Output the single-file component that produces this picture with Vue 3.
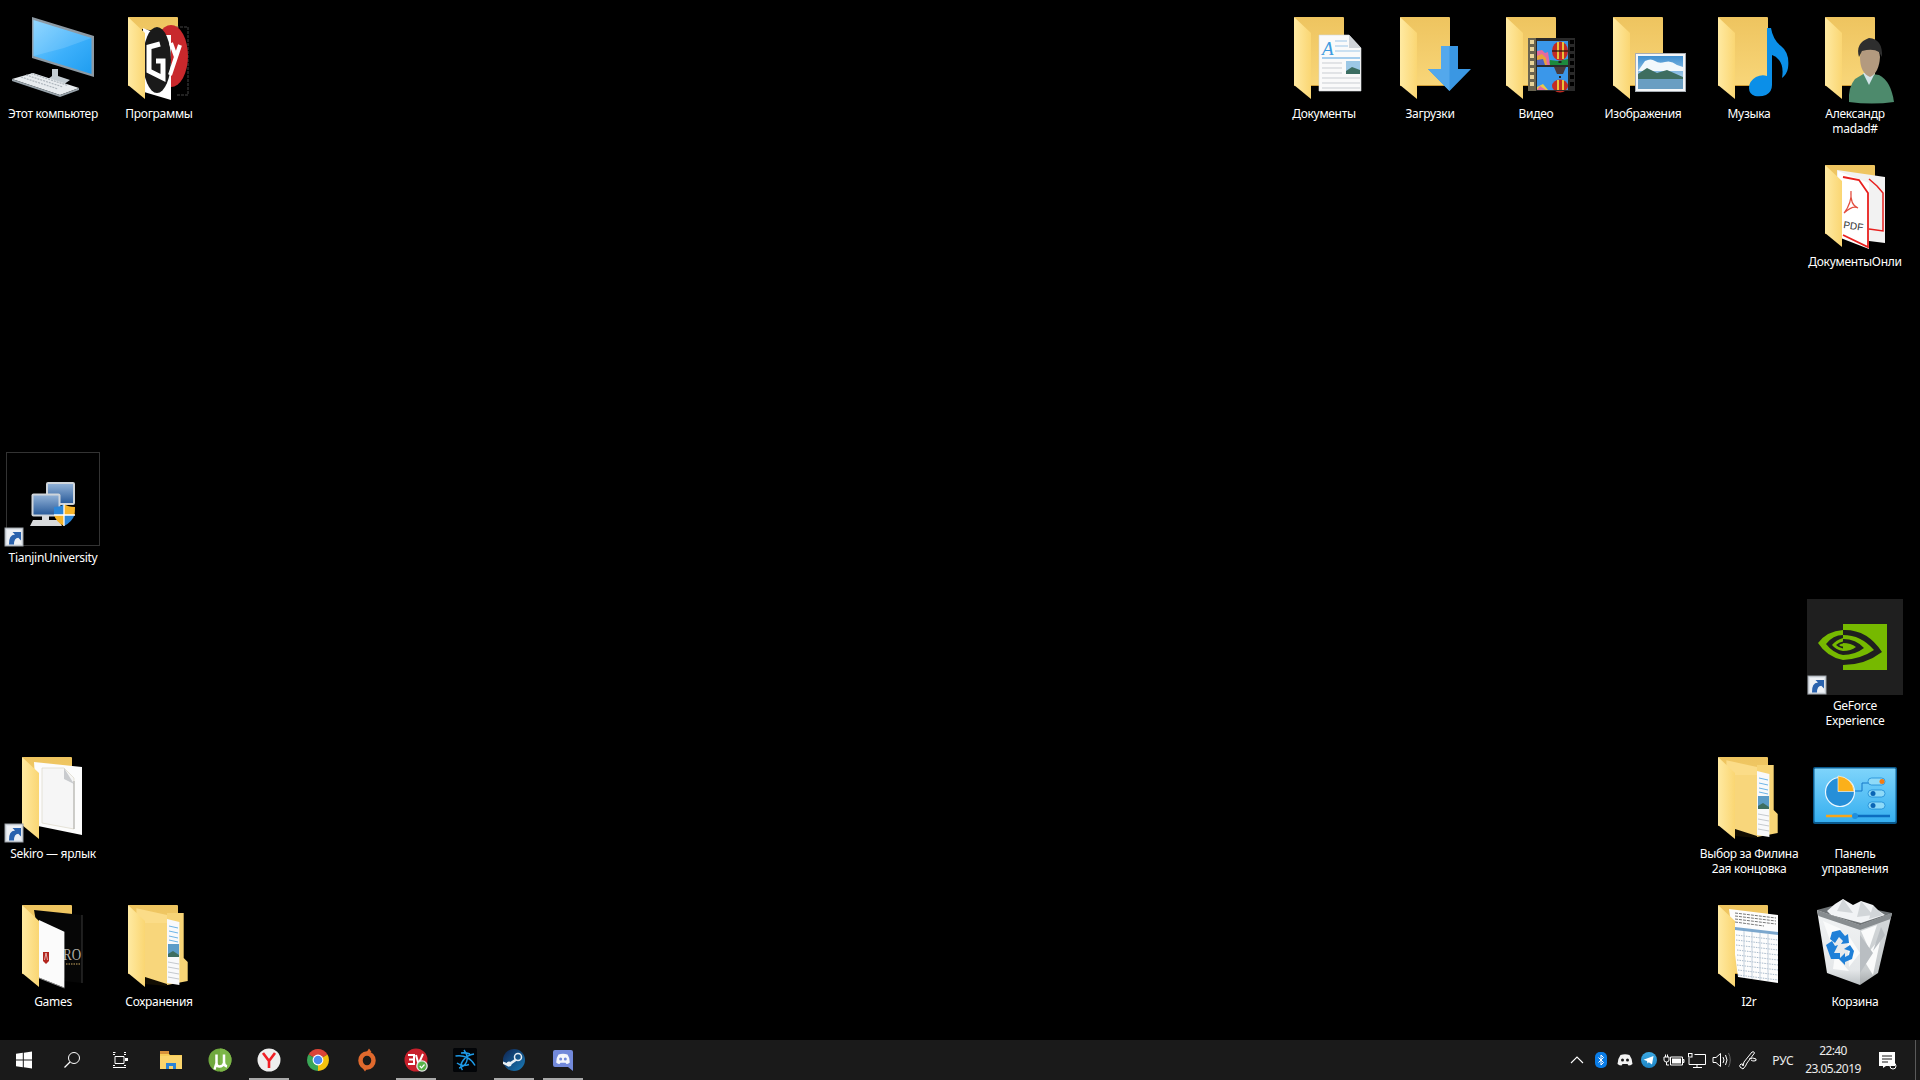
<script setup>
const items = [
  { id: 'pc', label: 'Этот компьютер', c: 53, r: 0 },
  { id: 'prog', label: 'Программы', c: 159, r: 0 },
  { id: 'docs', label: 'Документы', c: 1324, r: 0 },
  { id: 'down', label: 'Загрузки', c: 1430, r: 0 },
  { id: 'video', label: 'Видео', c: 1536, r: 0 },
  { id: 'pics', label: 'Изображения', c: 1643, r: 0 },
  { id: 'music', label: 'Музыка', c: 1749, r: 0 },
  { id: 'user', label: 'Александр\nmadad#', c: 1855, r: 0 },
  { id: 'pdf', label: 'ДокументыОнли', c: 1855, r: 1 },
  { id: 'tianjin', label: 'TianjinUniversity', c: 53, r: 3 },
  { id: 'nvidia', label: 'GeForce\nExperience', c: 1855, r: 4 },
  { id: 'sekiro', label: 'Sekiro — ярлык', c: 53, r: 5 },
  { id: 'stack', label: 'Выбор за Филина\n2ая концовка', c: 1749, r: 5 },
  { id: 'panel', label: 'Панель\nуправления', c: 1855, r: 5 },
  { id: 'games', label: 'Games', c: 53, r: 6 },
  { id: 'stack', label: 'Сохранения', c: 159, r: 6 },
  { id: 'sheet', label: 'I2r', c: 1749, r: 6 },
  { id: 'trash', label: 'Корзина', c: 1855, r: 6 }
]
const place = (i) => ({ left: i.c - 53 + 'px', top: 5 + 148 * i.r + 'px' })
const nudged = (i) => i.c < 200 || i.c === 1749

const sysButtons = ['t-start', 't-search', 't-task']
const apps = [
  { id: 't-explorer' },
  { id: 't-utorrent' },
  { id: 't-yandex', on: true },
  { id: 't-chrome' },
  { id: 't-origin' },
  { id: 't-av', on: true },
  { id: 't-bnet' },
  { id: 't-steam', on: true },
  { id: 't-discord', on: true }
]
const tray = ['s-chev', 's-bt', 's-disc', 's-tg', 's-power', 's-net', 's-vol']
</script>

<template>
  <div class="desktop">
    <svg class="defs" aria-hidden="true">
      <defs>
        <linearGradient id="fb" x1="0" y1="0" x2="0" y2="1"><stop offset="0" stop-color="#eec45f" /><stop offset="1" stop-color="#f8d679" /></linearGradient>
        <linearGradient id="ff" x1="0" y1="0" x2="1" y2="0"><stop offset="0" stop-color="#ffeaa2" /><stop offset="1" stop-color="#fad673" /></linearGradient>
        <linearGradient id="scr" x1="0" y1="0" x2="1" y2="1"><stop offset="0" stop-color="#7fd0ff" /><stop offset=".55" stop-color="#3db0fb" /><stop offset="1" stop-color="#1f9df0" /></linearGradient>
        <linearGradient id="sky" x1="0" y1="0" x2="0" y2="1"><stop offset="0" stop-color="#3f8fd0" /><stop offset="1" stop-color="#d5eaf7" /></linearGradient>
        <linearGradient id="mon" x1="0" y1="0" x2="0" y2="1"><stop offset="0" stop-color="#8fb0d6" /><stop offset="1" stop-color="#2c5d9b" /></linearGradient>
        <linearGradient id="panelbg" x1="0" y1="0" x2="0" y2="1"><stop offset="0" stop-color="#7ed4fb" /><stop offset="1" stop-color="#36aff0" /></linearGradient>
        <linearGradient id="steamg" x1="0" y1="0" x2="1" y2="1"><stop offset="0" stop-color="#0f2350" /><stop offset="1" stop-color="#1a7cb8" /></linearGradient>
        <linearGradient id="tgg" x1="0" y1="0" x2="0" y2="1"><stop offset="0" stop-color="#3ba8e2" /><stop offset="1" stop-color="#1c84c4" /></linearGradient>
        <linearGradient id="binl" x1="0" y1="0" x2="0" y2="1"><stop offset="0" stop-color="#f1f3f4" /><stop offset=".8" stop-color="#e4e7e9" /><stop offset="1" stop-color="#bcc1c4" /></linearGradient>
        <linearGradient id="binr" x1="0" y1="0" x2="0" y2="1"><stop offset="0" stop-color="#d4d8da" /><stop offset=".8" stop-color="#c8ccce" /><stop offset="1" stop-color="#a4a8ab" /></linearGradient>

        <symbol id="fback" viewBox="0 0 96 96">
          <path d="M18 13q0-1 1-1h48q1 0 1 1v68H18z" fill="url(#fb)" />
          <path d="M18 80.500h50" stroke="#cf9e38" stroke-width="1" />
        </symbol>
        <symbol id="fflap" viewBox="0 0 96 96">
          <path d="M18 12 35 28V94L18 80Z" fill="url(#ff)" />
        </symbol>
        <symbol id="sc" viewBox="0 0 96 96">
          <rect x="1" y="79" width="18" height="18" fill="#dfe4ea" stroke="#9aa0a6" />
          <rect x="3" y="81" width="14" height="14" fill="#eef1f5" />
          <path d="M5 95.500Q4.500 86 11 85.500L8.500 83H17V91.500L14.300 88.800Q10 89 10 95.500Z" fill="#2a62ad" />
        </symbol>

        <symbol id="pc" viewBox="0 0 96 96">
          <path d="M48 64h6v7l12 4-10 7-16-5 8-6z" fill="#c3ccd2" />
          <path d="M28 12 90 31V72L28 53Z" fill="#8d9aa4" />
          <path d="M29.500 15 87.500 33V69L29.500 51Z" fill="url(#scr)" />
          <path d="M29.500 15 87.500 33 60 43 29.500 51Z" fill="#fff" opacity=".14" />
          <path d="M29 68 75 83 56 90 8 74Z" fill="#e8ecef" />
          <path d="M8 74 56 90 75 83V85L56 92 8 76Z" fill="#98a3ab" />
          <path d="M17 72l37 12M22 70l37 12M27 68.500l37 12" stroke="#aeb6bd" stroke-width="1.200" stroke-dasharray="2 1" />
        </symbol>

        <symbol id="prog" viewBox="0 0 96 96">
          <use href="#fback" />
          <path d="M32 24 60 28 78 22V90L50 86 32 84Z" fill="#000" />
          <path d="M66 22h12v68H66" fill="none" stroke="#555" stroke-width=".8" stroke-dasharray="3 1" />
          <ellipse cx="61" cy="51" rx="17" ry="31" fill="#c8282c" />
          <path d="M33 23 50 30 61 30V95L34 87Z" fill="#fff" />
          <ellipse cx="47" cy="55" rx="14" ry="33" fill="#1a1a1a" />
          <path d="M50 39 39 42V66L53 73V56H46" fill="none" stroke="#fff" stroke-width="5" />
          <path d="M61 38 66 52M60 70 70 40" fill="none" stroke="#fff" stroke-width="4" />
          <use href="#fflap" />
        </symbol>

        <symbol id="docs" viewBox="0 0 96 96">
          <use href="#fback" /><use href="#fflap" />
          <path d="M43 30H73L85 43V86H43Z" fill="#fafafa" stroke="#d5d8dc" stroke-width=".6" />
          <path d="M73 30V43H85Z" fill="#cfd3d8" />
          <text x="46" y="50" class="docA">A</text>
          <path d="M59 36H71M59 41H72M59 46H84" stroke="#9cc6e8" stroke-width="1" />
          <path d="M46 53H84" stroke="#4f9fe0" stroke-width="1" />
          <path d="M46 58H66M46 63H66M46 68H66M46 73H84M46 78H84M46 83H84" stroke="#c9cdd2" stroke-width="1" />
          <rect x="70" y="56" width="14" height="13" fill="#9cc8e6" />
          <path d="M70 66 76 62 84 65V69H70Z" fill="#3c6e62" />
        </symbol>

        <symbol id="down" viewBox="0 0 96 96">
          <use href="#fback" /><use href="#fflap" />
          <path d="M59 41H76V64H89L67.500 86 46 64H59Z" fill="#3a97e3" />
          <path d="M59 41H67.500V86L46 64H59Z" fill="#53a8ec" />
        </symbol>

        <symbol id="video" viewBox="0 0 96 96">
          <use href="#fback" /><use href="#fflap" />
          <rect x="40" y="33" width="47" height="53" fill="#2a2a2a" />
          <rect x="40" y="33" width="8" height="53" fill="#6b6550" />
          <path d="M42 35h4v4h-4zM42 42h4v4h-4zM42 49h4v4h-4zM42 56h4v4h-4zM42 63h4v4h-4zM42 70h4v4h-4zM42 77h4v4h-4z" fill="#e8d49a" />
          <path d="M82 35h4v4h-4zM82 42h4v4h-4zM82 49h4v4h-4zM82 56h4v4h-4zM82 63h4v4h-4zM82 70h4v4h-4zM82 77h4v4h-4z" fill="#000" />
          <rect x="49" y="36" width="31" height="24" fill="#3a97ea" />
          <rect x="49" y="62" width="31" height="23" fill="#3a97ea" />
          <path d="M60 60 62 55 70 56 80 54V60Z" fill="#1d8a3d" />
          <path d="M49 46 54 45 57 48 60 47 62 60H49Z" fill="#e46aa0" />
          <path d="M49 51 54 49 58 53 59 60H49Z" fill="#e8a23a" />
          <path d="M49 55 55 54 57 60H49Z" fill="#4a62c0" />
          <path d="M49 82 55 79 60 85H49Z" fill="#e9c94a" />
          <path d="M49 85 52 81 58 85Z" fill="#e46aa0" />
          <ellipse cx="72" cy="46" rx="8" ry="9.500" fill="#c42a22" />
          <path d="M69 37h2v17h-2zM74 37h2v17h-2z" fill="#e8c33a" />
          <path d="M64 46H80" stroke="#201510" stroke-width="1.200" />
          <rect x="70.500" y="56" width="3" height="2" fill="#222" />
          <path d="M66 62H78L75 69H69Z" fill="#4a3a3a" />
          <rect x="71" y="71" width="2" height="2" fill="#222" />
          <ellipse cx="72" cy="81" rx="8" ry="6.500" fill="#c42a22" />
          <path d="M69 75h2v10h-2zM74 75h2v10h-2z" fill="#e8c33a" />
          <rect x="49" y="85" width="31" height="1" fill="#2a2a2a" />
        </symbol>

        <symbol id="pics" viewBox="0 0 96 96">
          <use href="#fback" /><use href="#fflap" />
          <rect x="40.500" y="48.500" width="50" height="38" fill="#f4f6f8" stroke="#a7adb3" />
          <rect x="43" y="51" width="45" height="33" fill="url(#sky)" />
          <path d="M50 56q6-3 10 0t10 1 12 3l6 2v4H43z" fill="#f2f8fc" />
          <path d="M43 69 52 63 62 68 72 65 88 72V74H43Z" fill="#3e6e60" />
          <rect x="43" y="74" width="45" height="10" fill="#6a9ec2" />
        </symbol>

        <symbol id="music" viewBox="0 0 96 96">
          <use href="#fback" /><use href="#fflap" />
          <path d="M67 23h4q2 12 10 18 9 7 7 22-1 6-6 10 2-12-3-18-3-4-7-5V80q0 7-6 10-5 2-11 1-6-2-6-8 0-7 7-11 6-3 11-1Z" fill="#0b8fe8" />
        </symbol>

        <symbol id="user" viewBox="0 0 96 96">
          <use href="#fback" /><use href="#fflap" />
          <path d="M42 97Q41 82 48 74L58 68 72 70Q84 76 87 97Q65 100 42 97Z" fill="#4d8a6c" />
          <path d="M56 68 62 80 68 68Z" fill="#d2e3e8" />
          <path d="M53 52Q53 68 63 72 72 68 73 52 72 40 62 40 54 42 53 52Z" fill="#b39a7f" />
          <path d="M52 52Q48 38 62 33 76 34 75 52L72 47Q66 43 55 46Z" fill="#2e2e2e" />
        </symbol>

        <symbol id="pdf" viewBox="0 0 96 96">
          <use href="#fback" />
          <path d="M30 17 78 24V90L30 84Z" fill="#f2f2f2" />
          <path d="M62 26 70 33 76 40V78L62 76" fill="none" stroke="#e8201e" stroke-width="1.500" />
          <path d="M31 18 62 30V96L31 84Z" fill="#fff" />
          <path d="M36 24 52 27 61 40V94L36 82" fill="none" stroke="#e8201e" stroke-width="1.800" />
          <path d="M44 38Q45 50 37 60 46 52 51 55 43 52 44 38Z" fill="none" stroke="#e24d3e" stroke-width="1.200" />
          <text x="36" y="75" class="pdfT" transform="rotate(8 36 75)">PDF</text>
          <use href="#fflap" />
        </symbol>

        <symbol id="tianjin" viewBox="0 0 96 96">
          <rect x="2.500" y="3.500" width="93" height="93" fill="#000" stroke="#333" />
          <rect x="42" y="33" width="29" height="23" rx="2" fill="#cfd5db" />
          <rect x="44" y="35" width="25" height="19" fill="url(#mon)" />
          <rect x="27.500" y="44.500" width="29" height="23" rx="2" fill="#cfd5db" />
          <rect x="29.500" y="46.500" width="25" height="19" fill="url(#mon)" />
          <path d="M38 67h7v4h10l3 6H26l3-6h9z" fill="#d8dadc" />
          <path d="M50 58Q57 58 60 55V66H50Z" fill="#2a85d8" />
          <path d="M60 55Q64 58 71 58 71 62 70.500 66H60Z" fill="#f6b52a" />
          <path d="M50 66H60V77Q52 73 50 66Z" fill="#f6b52a" />
          <path d="M60 66H70.500Q68 73 60 77Z" fill="#2a85d8" />
          <path d="M50 66H71M60 55V77" stroke="#fff" stroke-width="1.300" />
          <use href="#sc" />
        </symbol>

        <symbol id="nvidia" viewBox="0 0 96 96">
          <rect x="0" y="2" width="96" height="96" fill="#1f1f1f" />
          <rect x="36" y="27" width="44" height="46" fill="#76b900" />
          <path d="M36 33Q20 34 11 46 20 60 36 63Z" fill="#76b900" />
          <path d="M36 38Q26 38 19 47 26 56 36 58V54Q29 53 25 48 29 43 36 41Z" fill="#1f1f1f" />
          <path d="M36 44.500Q32 45 29 48 32 51 36 51.500V49.500Q33.500 49.500 32 48 33.500 46.500 36 46.500Z" fill="#1f1f1f" />
          <path d="M36 33Q60 32 75 55 58 68 36 68V63Q54 62 67 53 54 38 36 38Z" fill="#1f1f1f" />
          <path d="M36 42Q49 42 57 51 48 58 36 58V54Q44 54 49 50 44 46 36 46Z" fill="#1f1f1f" />
          <use href="#sc" />
        </symbol>

        <symbol id="sekiro" viewBox="0 0 96 96">
          <use href="#fback" />
          <path d="M30 17 78 22V90L34 81Z" fill="#fcfcfc" />
          <path d="M38 23H60L70 33V84L38 78Z" fill="#f6f6f6" stroke="#dcd8c8" stroke-width=".7" />
          <path d="M60 23 70 39 60 34Z" fill="#c9cbce" />
          <path d="M70 36V84" stroke="#9a9a9a" stroke-width=".8" />
          <use href="#fflap" />
          <use href="#sc" />
        </symbol>

        <symbol id="games" viewBox="0 0 96 96">
          <use href="#fback" />
          <path d="M30 17 78 22V90L42 86Z" fill="#060606" />
          <path d="M78 22V90" stroke="#3a3a3a" />
          <text transform="translate(59 67) scale(1 1.350)" class="ro">RO</text>
          <path d="M62 71H76" stroke="#8a7444" stroke-width="1.500" stroke-dasharray="1.500 1" />
          <path d="M35 27 60.400 38.700V94.700L35 84.700Z" fill="#fbfbfb" />
          <path d="M35 85 60.400 95" stroke="#888" stroke-width="1" />
          <path d="M39 59H45V68L42 71 39 68Z" fill="#b3261e" />
          <path d="M42 60 40.500 67M42 60 43.500 67" stroke="#fff" stroke-width=".6" />
          <use href="#fflap" />
        </symbol>

        <symbol id="stack" viewBox="0 0 96 96">
          <use href="#fback" />
          <path d="M57 20H73.700V65L77.700 69V88L57 92Z" fill="#f7d476" />
          <path d="M57 26 69.400 29V92L57 90Z" fill="#f8f9fb" />
          <path d="M59 33 68 35M59 38 68 40M59 43 68 45M59 47 68 49" stroke="#6db4e6" stroke-width="1" />
          <rect x="58" y="51" width="11" height="13" fill="#5b9cc8" />
          <path d="M58 61 63 58 69 62V64H58Z" fill="#3e6e60" />
          <path d="M58 69 69 71M58 74 69 76M58 79 69 81M58 84 69 86" stroke="#c5c9ce" stroke-width="1" />
          <path d="M35 84 57 90 57 93 35 91Z" fill="#120d02" />
          <path d="M26.400 15.300 57 22V88L47 70 26.400 80Z" fill="#fbdc88" />
          <path d="M35 30H57V91L35 84Z" fill="#f8d67b" />
          <use href="#fflap" />
        </symbol>

        <symbol id="sheet" viewBox="0 0 96 96">
          <use href="#fback" />
          <path d="M29 16 78 22V90L38 84Z" fill="#fdfdfd" />
          <path d="M35 20 76 25M35 23 76 28M35 26 76 31M35 29 64 33" stroke="#555" stroke-width=".8" stroke-dasharray="3 1" />
          <path d="M35 34 78 39V42L35 37Z" fill="#7ca7cd" />
          <path d="M36 42 78 47M36 47 78 52M36 52 78 57M37 57 78 62M37 62 78 67M37 67 78 72M37 72 78 77M38 77 78 82M38 82 78 87" stroke="#a8bacb" stroke-width="1" stroke-dasharray="1.500 1" />
          <path d="M44 38V85M52 39V86M60 40V87M68 41V88" stroke="#c2cfdc" stroke-width="1" />
          <use href="#fflap" />
        </symbol>

        <symbol id="panel" viewBox="0 0 96 96">
          <rect x="6" y="22" width="84" height="57" rx="2" fill="#0a5a8e" />
          <rect x="7.500" y="23.500" width="81" height="53.500" rx="1" fill="url(#panelbg)" />
          <path d="M63 38H55V46H48" fill="none" stroke="#1577c8" stroke-width="1" />
          <circle cx="33" cy="47" r="14.500" fill="#268fd8" stroke="#e8f6fe" stroke-width="1.200" />
          <path d="M31 31a17 16 0 0 1 16 15.500H31Z" fill="#fbb01a" stroke="#fff" stroke-width=".6" />
          <rect x="61" y="33" width="17" height="7" rx="3.500" fill="#8edaf8" stroke="#1d8ad4" stroke-width=".8" />
          <rect x="61" y="45" width="17" height="7" rx="3.500" fill="#8edaf8" stroke="#1d8ad4" stroke-width=".8" />
          <rect x="61" y="57" width="17" height="7" rx="3.500" fill="#8edaf8" stroke="#1d8ad4" stroke-width=".8" />
          <circle cx="75" cy="36.500" r="2.500" fill="#f47c11" />
          <circle cx="66" cy="48.500" r="2.500" fill="#0a65b5" />
          <circle cx="66" cy="60.500" r="2.500" fill="#0a65b5" />
          <path d="M19 71H47" stroke="#f7a51a" stroke-width="2.500" />
          <path d="M47 71H83" stroke="#0b6dc0" stroke-width="2.500" />
          <circle cx="48" cy="71" r="3" fill="#1e90e0" />
        </symbol>

        <symbol id="trash" viewBox="0 0 96 96">
          <path d="M10 17 36 10 85 20 53 32Z" fill="#6e7376" />
          <path d="M20 18 28 11 36 6 46 12 54 8 66 12 72 18 78 22 54 30 24 22Z" fill="#f1f3f5" />
          <path d="M36 6 46 20 30 18ZM54 8 66 22 50 24ZM66 13 76 22 62 26Z" fill="#d2d6d9" />
          <path d="M10 17 53 32V92L20 80Z" fill="url(#binl)" />
          <path d="M53 32 85 20 71 80 53 92Z" fill="url(#binr)" />
          <path d="M10 17 53 32 85 20 83.500 26 53 37 11.500 23Z" fill="#888d90" />
          <path d="M16 28 34 36 24 50ZM40 40 53 60 42 74ZM54 38 70 32 62 56ZM28 62 42 78 26 76ZM56 66 74 44 66 82Z" fill="#fafbfb" />
          <path d="M53 42 66 60 53 80ZM74 34 78 42 66 58Z" fill="#b9bec2" />
          <path d="M25 39 33 37 38 43 41 41 42 50 34 51 36 48 32 44 28 50 23 46ZM19 52 25 48 28 53 31 52 27 60 33 60V66H24ZM37 56 43 52 47 58 45 66 38 69V72L32 66 38 60V64L42 62 43 58Z" fill="#1f80d8" />
        </symbol>

        <symbol id="t-start" viewBox="0 0 24 24"><path d="M4 5.800 10.800 4.800V11.500H4ZM11.800 4.700 20 3.500V11.500H11.800ZM4 12.500H10.800V19.200L4 18.200ZM11.800 12.500H20V20.500L11.800 19.300Z" fill="#fff" /></symbol>
        <symbol id="t-search" viewBox="0 0 24 24"><circle cx="14" cy="10" r="5.500" fill="none" stroke="#fff" stroke-width="1" /><path d="M10 14 4.500 19.500" stroke="#fff" stroke-width="1.300" /></symbol>
        <symbol id="t-task" viewBox="0 0 24 24"><path d="M7 8.500H16V15.500H7ZM5 6.500H7M16 6.500H18M5 4.500H7.500M5 17.500H7M16 17.500H18M5 19.500H18M16 4.500H18" fill="none" stroke="#fff" stroke-width="1" /><rect x="17" y="10" width="3" height="3" fill="#fff" /></symbol>
        <symbol id="t-explorer" viewBox="0 0 24 24"><path d="M1 5h8l2 2h12v14H1z" fill="#f7cc57" /><rect x="1" y="3" width="9" height="3" fill="#d8923a" /><rect x="1" y="8" width="22" height="13" fill="#fbd56c" /><path d="M7 21v-6h10v6h-3v-3h-4v3z" fill="#2b83d6" /></symbol>
        <symbol id="t-utorrent" viewBox="0 0 24 24"><circle cx="12" cy="12" r="11.500" fill="#6fa83e" /><path d="M12 .5a11.500 11.500 0 0 1 0 23" fill="#7cb648" /><path d="M8.500 6.500V15L6.500 21.500M8.500 15Q8.500 18.500 11.500 18.500 15 18.500 16 15V6.500M16 14Q16 18 19 18.500" fill="none" stroke="#fff" stroke-width="2.500" /></symbol>
        <symbol id="t-yandex" viewBox="0 0 24 24"><circle cx="12" cy="12" r="11.500" fill="#eeeeee" /><path d="M6 5 12 13V20M18 5 12 13" fill="none" stroke="#f11f26" stroke-width="2.600" /></symbol>
        <symbol id="t-chrome" viewBox="0 0 24 24"><path d="M12 12 2.500 6.500A11 11 0 0 1 21.500 6.500Z" fill="#db4437" /><path d="M12 12 21.500 6.500A11 11 0 0 1 12 23Z" fill="#f4c20d" /><path d="M12 12 12 23A11 11 0 0 1 2.500 6.500Z" fill="#3aa757" /><circle cx="12" cy="12" r="5.400" fill="#fff" /><circle cx="12" cy="12" r="4.300" fill="#4a8af0" /></symbol>
        <symbol id="t-origin" viewBox="0 0 24 24"><ellipse cx="12" cy="12.500" rx="6.500" ry="7" fill="none" stroke="#e0692d" stroke-width="4.500" /><path d="M14 .5 16.500 4 11 5ZM10 23.500 7.500 20 13 19Z" fill="#e0692d" /></symbol>
        <symbol id="t-av" viewBox="0 0 24 24"><circle cx="12" cy="12" r="11.500" fill="#c8202c" /><path d="M4 7H10V16H4M5 11.500H10M12 7 14.500 16 19 6" fill="none" stroke="#fff" stroke-width="2" /><circle cx="18" cy="18" r="5.800" fill="#e8e8e8" /><circle cx="18" cy="18" r="4.500" fill="#58b24a" /><path d="M15.800 18 17.500 19.800 20.500 16.500" fill="none" stroke="#fff" stroke-width="1.200" /></symbol>
        <symbol id="t-bnet" viewBox="0 0 24 24"><rect width="24" height="24" rx="1.500" fill="#020407" /><path d="M11 2Q16 9 13.500 14T6 20M2.500 8Q9 7 14 9.500T22 17.500M21 6Q14 7 10 12.500T9.500 22M4 15Q9 19 16 16.500M8 5Q13 4.500 17 6" fill="none" stroke="#1e9be8" stroke-width="1.500" /></symbol>
        <symbol id="t-steam" viewBox="0 0 24 24"><circle cx="12" cy="12" r="11" fill="url(#steamg)" /><circle cx="16" cy="9" r="3.500" fill="none" stroke="#e8eef3" stroke-width="1.500" /><path d="M13.500 10.500 6 15.500 1 13.500V16L6.500 18.500 15 12.500Z" fill="#e8eef3" /><circle cx="7" cy="16" r="2.500" fill="#e8eef3" /></symbol>
        <symbol id="t-discord" viewBox="0 0 24 24"><path d="M4 2H20Q22 2 22 4V23L17 19H4Q2 19 2 17V4Q2 2 4 2Z" fill="#7289da" /><path d="M7.500 6.500Q12 5 16.500 6.500 19 10 18.800 14.500 17 16 15.500 16L14.500 14.700H9.500L8.500 16Q7 16 5.200 14.500 5 10 7.500 6.500Z" fill="#f4f6fb" /><circle cx="9.700" cy="11" r="1.500" fill="#7289da" /><circle cx="14.300" cy="11" r="1.500" fill="#7289da" /></symbol>

        <symbol id="s-chev" viewBox="0 0 24 24"><path d="M6 15 12 9 18 15" fill="none" stroke="#fff" stroke-width="1.100" /></symbol>
        <symbol id="s-bt" viewBox="0 0 24 24"><rect x="6" y="4" width="12" height="16" rx="5" fill="#0a7de8" /><path d="M9.500 9.500 14.500 14.500 12 17V7L14.500 9.500 9.500 14.500" fill="none" stroke="#fff" stroke-width="1" /></symbol>
        <symbol id="s-disc" viewBox="0 0 24 24"><path d="M7.500 7Q12 5.500 16.500 7 19.500 11 19.500 16 17.500 17.500 15.500 17.500L14.500 16H9.500L8.500 17.500Q6.500 17.500 4.500 16 4.500 11 7.500 7Z" fill="#f2f2f2" /><circle cx="9.500" cy="12" r="1.500" fill="#1a1a1a" /><circle cx="14.500" cy="12" r="1.500" fill="#1a1a1a" /></symbol>
        <symbol id="s-tg" viewBox="0 0 24 24"><circle cx="12" cy="12" r="8" fill="url(#tgg)" /><path d="M6.500 11.800 16.500 8 15 16.500 11.800 14.200 10.500 15.500 10 13Z" fill="#fff" /></symbol>
        <symbol id="s-power" viewBox="0 0 24 24"><path d="M9.500 9H21.500V17H9.500Z" fill="none" stroke="#fff" stroke-width="1" /><rect x="11" y="10.500" width="9" height="5" fill="#fff" /><path d="M22 11.500H23V14.500H22ZM3 9H8V12Q8 14 5.500 14T3 12ZM4.500 6.500V9M6.500 6.500V9M5.500 14V17H8" fill="none" stroke="#fff" stroke-width="1" /></symbol>
        <symbol id="s-net" viewBox="0 0 24 24"><path d="M9.500 6.500H20.500V16.500H4V10M12 16.500V19.500M8 19.500H17" fill="none" stroke="#fff" stroke-width="1" /><rect x="3.500" y="5.500" width="3.500" height="3.500" fill="none" stroke="#fff" stroke-width="1" /></symbol>
        <symbol id="s-vol" viewBox="0 0 24 24"><path d="M4 9.500H7L11.500 5.500V18.500L7 14.500H4Z" fill="none" stroke="#fff" stroke-width="1" /><path d="M14 9Q16 12 14 15M16.500 7Q19.500 12 16.500 17" fill="none" stroke="#fff" stroke-width="1" /><path d="M19.500 5Q23 12 19.500 19" fill="none" stroke="#666" stroke-width="1" /></symbol>
        <symbol id="s-pen" viewBox="0 0 24 24"><path d="M7 21 4 19Q3 17 5 16T7 18L8 14 16 4Q18 3 18.500 5L11 15Q10 18 7 21M13 11Q17 9 20 11Q21 13 18 13 16 13 15 12" fill="none" stroke="#fff" stroke-width="1" /></symbol>
        <symbol id="s-note" viewBox="0 0 24 24"><path d="M4 4H20V18H11L8 20V18H4Z" fill="#fff" /><path d="M7 8H17M7 11H17M7 14H13" stroke="#1a1a1a" stroke-width="1" /><circle cx="18" cy="18" r="3" fill="none" stroke="#fff" stroke-width="1" /></symbol>
      </defs>
    </svg>

    <div v-for="(it, n) in items" :key="n" class="item" :style="place(it)">
      <svg class="icon" :class="{ nudge: nudged(it) }" viewBox="0 0 96 96"><use :href="'#' + it.id" /></svg>
      <div class="label">{{ it.label }}</div>
    </div>

    <div class="taskbar">
      <div v-for="s in sysButtons" :key="s" class="sysbtn">
        <svg class="tico" viewBox="0 0 24 24"><use :href="'#' + s" /></svg>
      </div>
      <div class="apps">
        <div v-for="a in apps" :key="a.id" class="app" :class="{ on: a.on }">
          <svg class="tico" viewBox="0 0 24 24"><use :href="'#' + a.id" /></svg>
        </div>
      </div>
      <div class="tray">
        <div v-for="t in tray" :key="t" class="trayitem">
          <svg class="tico" viewBox="0 0 24 24"><use :href="'#' + t" /></svg>
        </div>
        <div class="penitem"><svg class="tico" viewBox="0 0 24 24"><use href="#s-pen" /></svg></div>
        <div class="lang">РУС</div>
        <div class="clock"><span>22:40</span><span>23.05.2019</span></div>
        <div class="notify"><svg class="tico" viewBox="0 0 24 24"><use href="#s-note" /></svg></div>
        <div class="showdesk"></div>
      </div>
    </div>
  </div>
</template>

<style>
html, body { margin: 0; background: #000; overflow: hidden; }
svg symbol { overflow: visible; }
</style>

<style scoped>
.desktop {
  position: relative;
  width: 1920px;
  height: 1080px;
  background: #000;
  overflow: hidden;
  font-family: "Noto Sans", "Open Sans", sans-serif;
  font-size: 12px;
  color: #fff;
}
.defs { position: absolute; width: 0; height: 0; }
.item {
  position: absolute;
  width: 106px;
  display: flex;
  flex-direction: column;
  align-items: center;
}
.icon { width: 96px; height: 96px; display: block; overflow: visible; }
.icon.nudge { transform: translateX(-1px); }
.label {
  margin-top: 5px;
  line-height: 15px;
  text-align: center;
  white-space: pre-line;
  letter-spacing: -0.3px;
}
.docA { font: italic 19px "Liberation Serif", serif; fill: #3d9be0; }
.pdfT { font: 10px "Liberation Sans", sans-serif; fill: #333; }
.ro { font: 13px "Liberation Serif", serif; fill: #b0aca4; }
.taskbar {
  position: absolute;
  left: 0;
  right: 0;
  bottom: 0;
  height: 40px;
  background: #1a1a1a;
  display: flex;
  align-items: stretch;
}
.tico { width: 24px; height: 24px; display: block; }
.sysbtn { width: 48px; display: flex; align-items: center; justify-content: center; }
.apps { display: flex; margin-left: 2px; }
.app { position: relative; width: 49px; display: flex; align-items: center; justify-content: center; }
.app.on::after {
  content: "";
  position: absolute;
  left: 5px;
  bottom: 0;
  width: 40px;
  height: 2px;
  background: #a9a9a9;
}
.tray { margin-left: auto; display: flex; align-items: stretch; }
.trayitem { width: 24px; display: flex; align-items: center; justify-content: center; }
.penitem { width: 30px; display: flex; align-items: center; justify-content: center; }
.lang { width: 40px; display: flex; align-items: center; justify-content: center; color: #ececec; }
.clock { width: 60px; display: flex; flex-direction: column; align-items: center; justify-content: center; line-height: 18px; color: #ececec; letter-spacing: -0.6px; }
.notify { width: 48px; display: flex; align-items: center; justify-content: center; }
.showdesk { width: 9px; box-sizing: border-box; padding-left: 4px; }
.showdesk::before { content: ""; display: block; width: 1px; height: 100%; background: #5a5a5a; }
</style>
